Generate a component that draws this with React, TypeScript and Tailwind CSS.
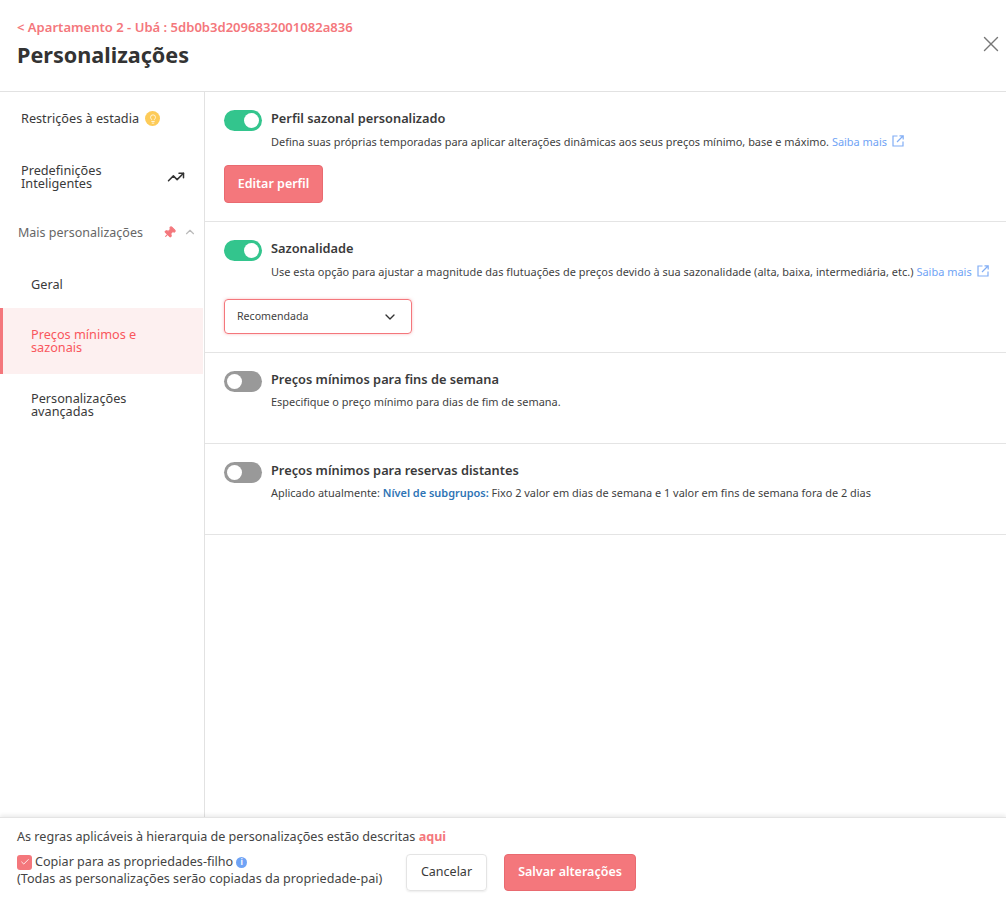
import React from "react";
import { X, ChevronUp, ChevronDown, TrendingUp, Pin, Check, Lightbulb } from "lucide-react";

const font = "font-['Noto_Sans','Roboto',sans-serif]";

function Toggle({ on }: { on: boolean }) {
  return (
    <div className={`w-[38px] h-[21px] shrink-0 rounded-full flex items-center px-[3px] ${on ? "bg-[#33c58d] justify-end" : "bg-[#999999] justify-start"}`}>
      <div className="w-[15px] h-[15px] rounded-full bg-white" />
    </div>
  );
}

function Ext() {
  return (
    <svg width="12" height="12" viewBox="0 0 12 12" fill="none" stroke="#82aef5" strokeWidth="1.2" className="inline-block ml-[5px] align-[-1px]">
      <path d="M5.5 1H1v10h10V6.5" />
      <path d="M5 7l6-6M7.5 .8h3.7v3.7" />
    </svg>
  );
}

function Section({ on, title, h, children }: { on: boolean; title: string; h: string; children: React.ReactNode }) {
  return (
    <section className={`${h} shrink-0 border-b border-[#e4e4e4] pl-[19px] pt-[18px]`}>
      <div className="flex gap-[9px]">
        <Toggle on={on} />
        <div className="text-[12.8px] leading-[17px] font-semibold text-[#3a3a3a]">{title}</div>
      </div>
      {children}
    </section>
  );
}

function Desc({ tight, wide, children }: { tight?: boolean; wide?: boolean; children: React.ReactNode }) {
  return <p className={`ml-[47px] ${tight ? "mt-[3px]" : "mt-[4px]"} ${wide ? "tracking-[0.023px]" : ""} text-[10.95px] leading-[14px] text-[#3f3f3f] whitespace-nowrap`}>{children}</p>;
}

export default function App() {
  return (
    <div className={`${font} h-[897px] w-[1006px] bg-white flex flex-col overflow-hidden`}>
      <header className="h-[92px] shrink-0 border-b border-[#e2e2e2] pl-[17px] pr-[2px] pt-[19px] flex justify-between">
        <div>
          <div className="text-[13.05px] leading-[17px] font-semibold text-[#f4777c]">&lt; Apartamento 2 - Ubá : 5db0b3d2096832001082a836</div>
          <h1 className="mt-[3px] text-[21.6px] leading-[32px] font-bold text-[#333333]">Personalizações</h1>
        </div>
        <button className="self-start mt-[12px] text-[#777777]"><X size={26} strokeWidth={1.3} /></button>
      </header>

      <main className="flex-1 flex min-h-0">
        <aside className="w-[205px] shrink-0 border-r border-[#e2e2e2] text-[12.7px] leading-[13px] text-[#3a3a3a]">
          <div className="h-[53px] pl-[21px] flex items-center gap-[6px]">
            <span className="whitespace-nowrap">Restrições à estadia</span>
            <span className="w-[15px] h-[15px] rounded-full bg-[#fdcb58] flex items-center justify-center"><Lightbulb size={10} color="white" strokeWidth={1.8} /></span>
          </div>
          <div className="h-[54px] mt-[5px] pl-[21px] pr-[19px] flex items-center justify-between">
            <span>Predefinições<br />Inteligentes</span>
            <TrendingUp size={18} color="#333" strokeWidth={2} />
          </div>
          <div className="h-[44px] mt-[6px] pl-[18px] pr-[7px] flex items-center text-[#666666]">
            <span className="whitespace-nowrap text-[12.5px]">Mais personalizações</span>
            <Pin size={13} className="ml-[20px] rotate-45 shrink-0" color="#f4777c" fill="#f4777c" />
            <ChevronUp size={14} className="ml-[7px] shrink-0" color="#bbbbbb" />
          </div>
          <div className="h-[54px] pt-[6px] pl-[31px] flex items-center">Geral</div>
          <div className="h-[66px] pl-[28px] mr-[1px] flex items-center border-l-[3px] border-[#f4777c] bg-[#fdf0f0] text-[#f9575d]">
            <span>Preços mínimos e<br />sazonais</span>
          </div>
          <div className="h-[61px] pl-[31px] flex items-center">
            <span>Personalizações<br />avançadas</span>
          </div>
        </aside>

        <div className="flex-1 min-w-0">
          <Section on title="Perfil sazonal personalizado" h="h-[130px]">
            <Desc>Defina suas próprias temporadas para aplicar alterações dinâmicas aos seus preços mínimo, base e máximo. <span className="text-[#6fa3f5]">Saiba mais</span><Ext /></Desc>
            <button className="mt-[16px] w-[99px] h-[38px] rounded-[4px] bg-[#f4777c] border border-[#e96a70] text-white text-[12.5px] font-semibold">Editar perfil</button>
          </Section>
          <Section on title="Sazonalidade" h="h-[131px]">
            <Desc wide>Use esta opção para ajustar a magnitude das flutuações de preços devido à sua sazonalidade (alta, baixa, intermediária, etc.) <span className="text-[#6fa3f5]">Saiba mais</span><Ext /></Desc>
            <div className="mt-[20px] w-[188px] h-[35px] rounded-[4px] border border-[#f4777c] shadow-[0_0_3px_rgba(244,119,124,0.5)] pl-[12px] pr-[13px] flex items-center justify-between text-[10.6px] text-[#3f3f3f]">
              <span>Recomendada</span>
              <ChevronDown size={16} color="#333" />
            </div>
          </Section>
          <Section on={false} title="Preços mínimos para fins de semana" h="h-[91px]">
            <Desc tight>Especifique o preço mínimo para dias de fim de semana.</Desc>
          </Section>
          <Section on={false} title="Preços mínimos para reservas distantes" h="h-[91px]">
            <Desc tight>Aplicado atualmente: <span className="font-semibold text-[#2f74b5]">Nível de subgrupos:</span> Fixo 2 valor em dias de semana e 1 valor em fins de semana fora de 2 dias</Desc>
          </Section>
        </div>
      </main>

      <footer className="h-[80px] shrink-0 border-t border-[#e4e4e4] shadow-[0_-2px_4px_rgba(0,0,0,0.08)] pl-[17px] pt-[11px] text-[12.6px] text-[#444444] relative bg-white">
        <div className="leading-[16px]">As regras aplicáveis à hierarquia de personalizações estão descritas <span className="font-bold text-[#f4777c]">aqui</span></div>
        <div className="flex mt-[9px]">
          <div className="w-[389px] leading-[16px]">
            <div className="flex items-center">
              <span className="w-[15px] h-[15px] rounded-[3px] bg-[#f4777c] flex items-center justify-center mr-[3px]"><Check size={10} color="white" strokeWidth={2} /></span>
              <span>Copiar para as propriedades-filho</span>
              <span className="ml-[3px] w-[11px] h-[11px] rounded-full bg-[#6fa3f5] flex items-center justify-center text-white text-[8px] font-bold leading-none">i</span>
            </div>
            <div className="mt-[1px]">(Todas as personalizações serão copiadas da propriedade-pai)</div>
          </div>
          <button className="w-[81px] h-[37px] rounded-[4px] border border-[#e4e4e4] shadow-[0_1px_2px_rgba(0,0,0,0.08)] text-[12.5px] text-[#3a3a3a]">Cancelar</button>
          <button className="ml-[17px] w-[132px] h-[37px] rounded-[4px] bg-[#f4777c] border border-[#e96a70] text-white text-[12.5px] font-semibold">Salvar alterações</button>
        </div>
      </footer>
    </div>
  );
}
